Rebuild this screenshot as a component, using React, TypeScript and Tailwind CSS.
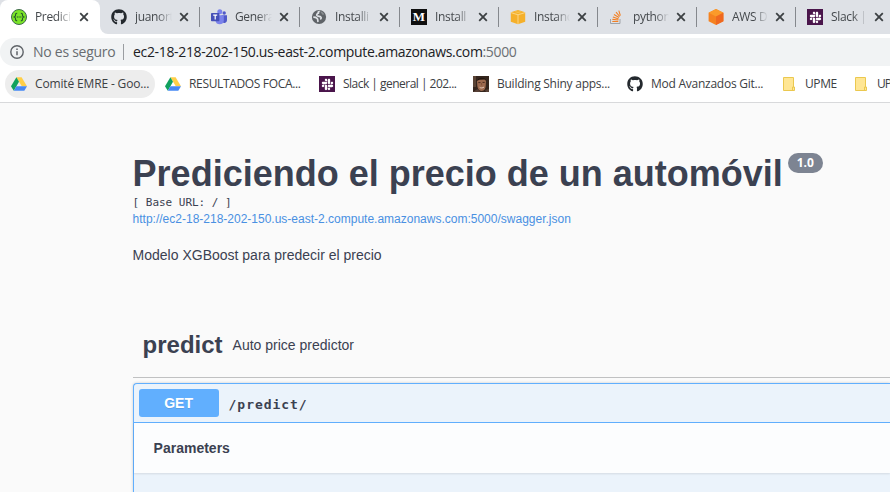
import React from "react";
import { FaGithub, FaSlack } from "react-icons/fa";

const ui = "font-['Open_Sans','Noto_Sans',sans-serif]";

function SwaggerIcon() {
  return (
    <svg viewBox="0 0 16 16" className="size-4">
      <circle cx="8" cy="8" r="7.5" fill="#7be528" stroke="#3f6b4c" strokeWidth="1" />
      <path
        d="M6.2 4.2C4.8 4.1 4.6 4.7 4.6 5.8S4.4 7.6 3.3 8c1.1.4 1.3 1.1 1.3 2.2s.2 1.7 1.6 1.6M9.8 4.2c1.4-.1 1.6.5 1.6 1.6s.2 1.8 1.3 2.2c-1.1.4-1.3 1.1-1.3 2.2s-.2 1.7-1.6 1.6"
        fill="none"
        stroke="#23522c"
        strokeWidth="1.1"
      />
      <path d="M5.8 8h4.6" stroke="#23522c" strokeWidth="1.2" strokeDasharray="1.2 .5" />
    </svg>
  );
}

function TeamsIcon() {
  return (
    <svg viewBox="0 0 16 16" className="size-4">
      <circle cx="13.2" cy="4" r="1.7" fill="#5059c9" />
      <path d="M10.5 6.3H16v5a2.6 2.6 0 0 1-4.5 1.8z" fill="#5059c9" />
      <circle cx="8.8" cy="2.8" r="2.5" fill="#7b83eb" />
      <path d="M4.5 6.3h8.3v5.4a4.2 4.2 0 0 1-8.3 0z" fill="#7b83eb" />
      <rect x="0" y="4" width="8.4" height="8.2" rx=".8" fill="#4650b8" />
      <path d="M2.2 6.2h4M4.2 6.2v4.3" stroke="#fff" strokeWidth="1.2" />
    </svg>
  );
}

function GlobeIcon() {
  return (
    <svg viewBox="0 0 16 16" className="size-4">
      <circle cx="8" cy="8" r="7.1" fill="#5f6368" />
      <path
        d="M8.800 2.300C7.200 2.500 6.900 3.400 7.300 4.300 6.200 4.700 5.300 5.500 6 6.500c.8 1 2.600.6 3.600 1.300 1 .8.6 2-.4 2.500M2.300 8.200c1.200 0 2.700.2 3.800 1.200.9.9.6 2 .9 3.600"
        fill="none"
        stroke="#dee1e6"
        strokeWidth="1.700"
      />
      <path d="M9 2.300c1.800.2 3.600 1.500 4.300 3.300l-1.800.2z" fill="#dee1e6" opacity=".35" />
    </svg>
  );
}

function MediumIcon() {
  return (
    <span className="flex size-4 items-center justify-center bg-[#0f0f0f] font-['Liberation_Serif',serif] text-[13px] leading-4 font-bold text-white">
      M
    </span>
  );
}

function BoxIcon() {
  return (
    <svg viewBox="0 0 16 16" className="size-4">
      <path d="M.8 3.2 8 1l7.200 2.200v9.600L8 15.200.8 12.800z" fill="#f5b02a" />
      <path d="M1 3.6 8 5.800l7-2.200M8 5.800V15" stroke="#fde0a0" strokeWidth=".8" fill="none" />
      <path d="m5 2.200 6.400 2.400M11 2.200 4.600 4.600" stroke="#fac758" strokeWidth=".6" />
    </svg>
  );
}

function StackIcon() {
  return (
    <svg viewBox="0 0 16 16" className="size-4" fill="none">
      <path d="M1.500 10v4.500h9.500V10" stroke="#9fa3a8" strokeWidth="1" />
      <path
        d="M3.300 12.500h6M3.400 10.400l6 .6M3.900 8l5.700 1.900M5 5.500l5 3M7 3.200l3.700 4.300M9.800 1.700l1.600 5"
        stroke="#f48024"
        strokeWidth="1.100"
      />
    </svg>
  );
}

function CubeIcon() {
  return (
    <svg viewBox="0 0 16 16" className="size-4">
      <path d="M8 0l7.4 3.8v8.4L8 16 .6 12.2V3.8z" fill="#f58220" />
      <path d="M8 0l7.4 3.8L8 7.6.6 3.8z" fill="#fb9a2a" />
      <path d="M15.400 3.800v8.400L8 16V7.600z" fill="#ef6820" />
    </svg>
  );
}

function SlackIcon() {
  return (
    <span className="flex size-4 items-center justify-center bg-[#4a154b] text-white">
      <FaSlack size={13} />
    </span>
  );
}

function DriveIcon() {
  return (
    <svg viewBox="0 0 16 16" className="size-4">
      <path d="M5.4 1.200h5.200L16 10.200h-5.200z" fill="#ffcf48" />
      <path d="M5.400 1.200 8 5.700 2.800 14.800 0 10.200z" fill="#11a15e" />
      <path d="M5.400 10.200H16l-2.700 4.600H2.800z" fill="#4688f4" />
    </svg>
  );
}

function PortraitIcon() {
  return (
    <svg viewBox="0 0 16 16" className="size-4">
      <rect width="16" height="16" fill="#35251d" />
      <path d="M0 0h3v11H0z" fill="#5a4335" />
      <path d="M4 4.500C4 2 12.500 1.500 13 5l-.4 6c-.6 3-2.500 4-4.200 4C6 15 4.600 12.500 4.300 10z" fill="#9d6a4f" />
      <path d="M3.500 5C4 1.500 12 0 13.600 5l-2-1.500-5 .2z" fill="#21150f" />
      <path d="M5.300 6.600h2.200M9.500 6.400h2.200" stroke="#4a2c20" strokeWidth="1" />
      <path d="m8.500 7 .2 2.400" stroke="#7c4b35" strokeWidth=".8" />
      <path d="M6.600 11.300c1.400 1 3.200.8 4.400-.3" stroke="#e6cbbd" strokeWidth="1" fill="none" />
      <path d="M0 16l4.500-3 3 3zM13 16l-1-2 4-1v3z" fill="#574036" />
    </svg>
  );
}

function FolderIcon() {
  return (
    <svg viewBox="0 0 12 14" className="h-3.5 w-3">
      <path d="M.5.500h10v9.500h1v3.500H.5z" fill="#ffe694" stroke="#ebc84f" />
      <path d="M9.500 13.500V10h1.500" stroke="#ebc84f" fill="none" />
    </svg>
  );
}

const wide = { width: "w-[100px]", text: "w-[37px]" };
const narrow = { width: "w-[99px]", text: "w-[36px]" };

const tabs = [
  { label: "Predici", icon: <SwaggerIcon />, ...wide, active: true },
  { label: "juanort", icon: <FaGithub size={16} color="#24292e" />, ...wide },
  { label: "Genera", icon: <TeamsIcon />, ...wide },
  { label: "Installi", icon: <GlobeIcon />, ...wide },
  { label: "Install", icon: <MediumIcon />, ...narrow },
  { label: "Instanc", icon: <BoxIcon />, ...narrow },
  { label: "python", icon: <StackIcon />, ...narrow },
  { label: "AWS D", icon: <CubeIcon />, ...narrow },
  { label: "Slack |", icon: <SlackIcon />, ...narrow },
];

const bookmarks = [
  { label: "Comité EMRE - Goo...", icon: <DriveIcon />, box: "w-[150px] rounded-full bg-[#ededed] pl-1.5", text: "tracking-[-0.15px]" },
  { label: "RESULTADOS FOCA...", icon: <DriveIcon />, box: "w-[154px] pl-2.5", text: "tracking-[-0.34px]" },
  { label: "Slack | general | 202...", icon: <SlackIcon />, box: "w-[154px] pl-2.5", text: "tracking-[-0.52px]" },
  { label: "Building Shiny apps...", icon: <PortraitIcon />, box: "w-[154px] pl-2.5", text: "tracking-[-0.25px]" },
  { label: "Mod Avanzados Git...", icon: <FaGithub size={16} color="#24292e" />, box: "w-[154px] pl-2.5", text: "tracking-[-0.25px]" },
  { label: "UPME", icon: <FolderIcon />, box: "w-[72px] pl-3", text: "tracking-[-0.4px] ml-0.5" },
  { label: "UP", icon: <FolderIcon />, box: "w-[72px] pl-3", text: "tracking-[-0.9px] ml-0.5" },
];

function TabStrip() {
  return (
    <div className="flex h-[34px] w-[892px] bg-white">
      {tabs.map((tab, i) => (
        <div key={i} className={`shrink-0 bg-[#dee1e6] ${tab.width} ${i === 1 ? "rounded-bl-lg" : ""}`}>
          <div className={`flex h-full items-center pl-[11px] ${tab.active ? "rounded-t-lg bg-white" : ""}`}>
            <span className="flex w-4 shrink-0 justify-center">{tab.icon}</span>
            <span
              className={`ml-2 shrink-0 text-[12px] leading-4 tracking-[-0.35px] whitespace-nowrap text-[#45494d] [mask-image:linear-gradient(to_right,#000_60%,transparent)] ${tab.text}`}
            >
              {tab.label}
            </span>
            <svg viewBox="0 0 10 10" className="ml-[7px] size-2.5 shrink-0">
              <path d="M1.200 1.200l7.600 7.600M8.800 1.200L1.200 8.800" stroke="#3c4043" strokeWidth="1.800" />
            </svg>
            {i > 0 && i < 8 && <span className="ml-auto h-5 w-px bg-[#85888d]" />}
          </div>
        </div>
      ))}
    </div>
  );
}

export default function App() {
  return (
    <div className="h-[492px] w-[890px] overflow-hidden bg-[#fafafa] font-['Liberation_Sans',Arial,sans-serif] text-[#3b4151]">
      <header className={`h-[103px] overflow-hidden border-b border-[#d8d9db] bg-white ${ui}`}>
        <TabStrip />
        <div className="mt-1 flex h-7 items-center rounded-l-full bg-[#f1f3f4] pl-2.5 text-[14px] whitespace-nowrap">
          <svg viewBox="0 0 14 14" className="size-3.5" fill="none" stroke="#5f6368">
            <circle cx="7" cy="7" r="6.200" strokeWidth="1.400" />
            <path d="M7 6.200v4M7 3.500v1.400" strokeWidth="1.500" />
          </svg>
          <span className="ml-[9px] w-[82px] pb-0.5 tracking-[-0.27px] text-[#686c70]">No es seguro</span>
          <span className="ml-2 h-4 w-px bg-[#9a9da1]" />
          <span className="ml-[9px] pb-0.5 tracking-[-0.34px] text-[#202124]">
            ec2-18-218-202-150.us-east-2.compute.amazonaws.com<span className="text-[#6b6f73]">:5000</span>
          </span>
        </div>
        <nav className="mt-1 flex h-7 pl-[5px]">
          {bookmarks.map((b, i) => (
            <div key={i} className={`flex shrink-0 items-center ${b.box}`}>
              <span className="shrink-0">{b.icon}</span>
              <span className={`pl-2 text-[12px] leading-4 whitespace-nowrap text-[#3c4043] ${b.text}`}>{b.label}</span>
            </div>
          ))}
        </nav>
      </header>

      <main className="pl-[132.6px]">
        <div className="flex items-start pt-[50px]">
          <h1 className="text-[36px] leading-[42px] font-bold whitespace-nowrap">Prediciendo el precio de un automóvil</h1>
          <span className="ml-[5px] flex h-5 w-[35px] items-center justify-center rounded-full bg-[#7d8492] font-['Open_Sans',sans-serif] text-[12px] font-bold text-white">
            1.0
          </span>
        </div>
        <pre className="h-4 font-['DejaVu_Sans_Mono',monospace] text-[11px] leading-4 tracking-[-0.02px]">[ Base URL: / ]</pre>
        <a className="block h-4 text-[12px] leading-4 text-[#4990e2]">
          http://ec2-18-218-202-150.us-east-2.compute.amazonaws.com:5000/swagger.json
        </a>
        <p className="mt-[18px] text-[14px] leading-5">Modelo XGBoost para predecir el precio</p>

        <section className="mt-[49px]">
          <h3 className="flex h-[64px] items-center border-b border-[#c0c1c2] pl-2.5">
            <span className="pb-0.5 text-[24px] leading-7 font-bold">predict</span>
            <span className="pl-2.5 text-[14px]">Auto price predictor</span>
          </h3>
          <div className="mt-[5px] h-[130px] rounded-tl border-t border-l border-[#61affe] bg-[#ebf3fb] shadow-[0_0_3px_rgba(0,0,0,0.19)]">
            <div className="flex h-[39px] items-center border-b border-[#61affe] pl-[5px]">
              <span className="flex h-7 w-20 items-center justify-center rounded-[3px] bg-[#61affe] text-[14px] font-bold text-white [text-shadow:0_1px_0_rgba(0,0,0,0.1)]">
                GET
              </span>
              <span className="pt-1 pl-2.5 font-['DejaVu_Sans_Mono',monospace] text-[13px] font-bold tracking-[0.95px]">/predict/</span>
            </div>
            <div className="flex h-[50px] items-center bg-white/85 pl-5 text-[14px] font-bold shadow-[0_1px_2px_rgba(0,0,0,0.1)]">
              Parameters
            </div>
          </div>
        </section>
      </main>
    </div>
  );
}
